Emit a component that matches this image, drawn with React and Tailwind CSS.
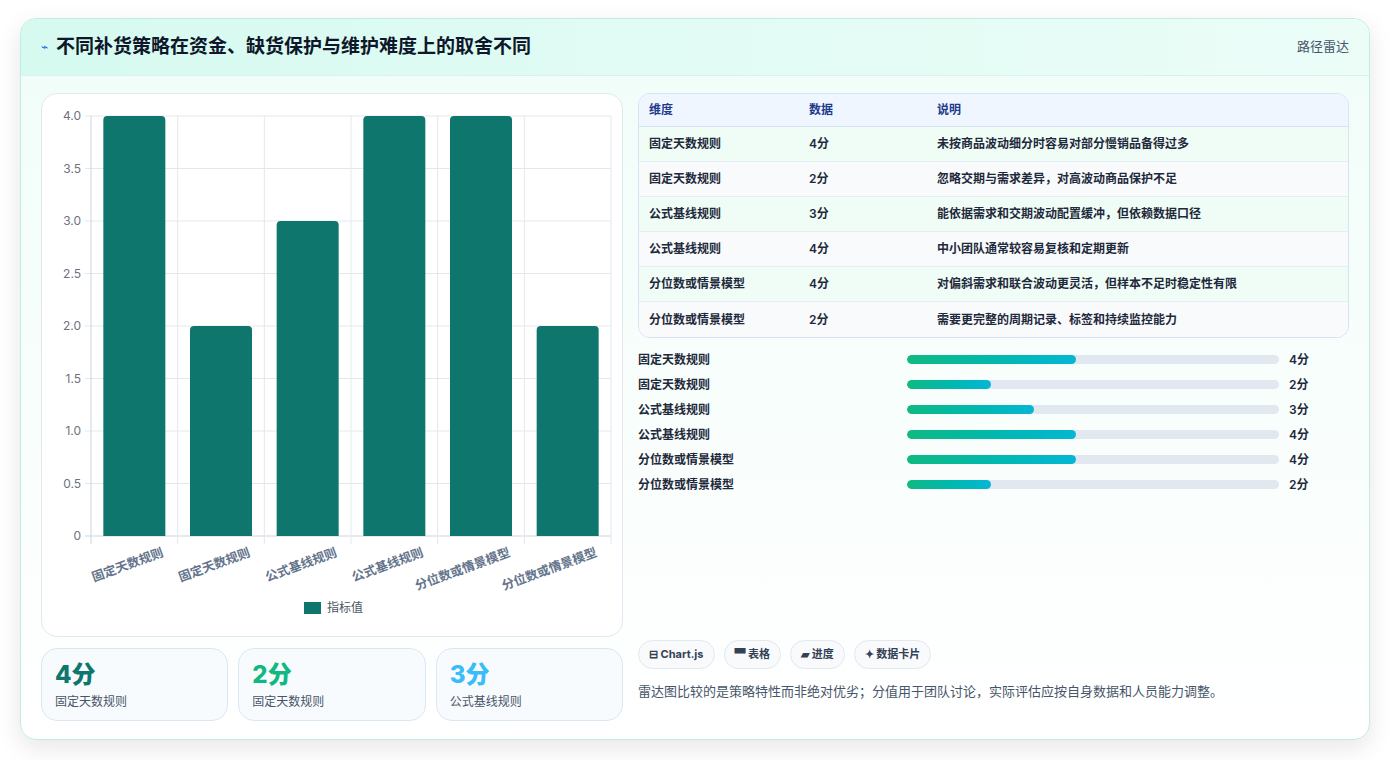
import React from "react";

const bars = [
  ["固定天数规则", 4],
  ["固定天数规则", 2],
  ["公式基线规则", 3],
  ["公式基线规则", 4],
  ["分位数或情景模型", 4],
  ["分位数或情景模型", 2],
];
const rows = [
  ["固定天数规则", "4分", "未按商品波动细分时容易对部分慢销品备得过多"],
  ["固定天数规则", "2分", "忽略交期与需求差异，对高波动商品保护不足"],
  ["公式基线规则", "3分", "能依据需求和交期波动配置缓冲，但依赖数据口径"],
  ["公式基线规则", "4分", "中小团队通常较容易复核和定期更新"],
  ["分位数或情景模型", "4分", "对偏斜需求和联合波动更灵活，但样本不足时稳定性有限"],
  ["分位数或情景模型", "2分", "需要更完整的周期记录、标签和持续监控能力"],
];

function Chart() {
  const x0 = 49, x1 = 569, y0 = 22, y1 = 442;
  const cw = (x1 - x0) / 6;
  const ticks = ["0", "0.5", "1.0", "1.5", "2.0", "2.5", "3.0", "3.5", "4.0"];
  return (
    <svg width="582" height="542" className="block" style={{ fontFamily: "Inter, 'Noto Sans CJK SC', sans-serif" }}>
      {ticks.map((t, i) => {
        const y = y1 - i * 52.5;
        return (
          <g key={i}>
            <line x1={x0 - 6} x2={x1} y1={y} y2={y} stroke={i === 0 ? "#cbd5e1" : "#e5e7eb"} />
            <text x={x0 - 10} y={y + 4} textAnchor="end" fontSize="12" fill="#6b7280">{t}</text>
          </g>
        );
      })}
      {Array.from({ length: 7 }).map((_, i) => (
        <line key={i} x1={x0 + i * cw} x2={x0 + i * cw} y1={y0} y2={y1 + 8} stroke={i === 0 ? "#cbd5e1" : "#e5e7eb"} />
      ))}
      {bars.map(([l, v], i) => {
        const cx = x0 + i * cw + cw / 2;
        const h = v * 105;
        return (
          <g key={i}>
            <path d={`M${cx - 31},${y1} V${y1 - h + 4} Q${cx - 31},${y1 - h} ${cx - 27},${y1 - h} H${cx + 27} Q${cx + 31},${y1 - h} ${cx + 31},${y1 - h + 4} V${y1} Z`} fill="#0f766e" />
            <text transform={`translate(${cx + 30},${y1 + 20}) rotate(-20)`} textAnchor="end" fontSize="12.5" fontWeight="700" fill="#64748b">{l}</text>
          </g>
        );
      })}
      <rect x="262" y="508" width="17" height="12" fill="#0f766e" />
      <text x="285" y="518" fontSize="12" fill="#4b5563">指标值</text>
    </svg>
  );
}

export default function App() {
  return (
    <div className="min-h-[760px] bg-white p-5 pt-[18px]" style={{ fontFamily: "Inter, 'Noto Sans CJK SC', sans-serif" }}>
      <div className="w-[1350px] h-[722px] rounded-2xl border border-[#bfeee0] shadow-[0_8px_24px_rgba(15,23,42,0.10)] overflow-hidden bg-gradient-to-b from-[#f0fdf8] to-white flex flex-col">
        <div className="h-[57px] flex items-center justify-between px-5 bg-gradient-to-r from-[#d6faf0] to-[#ecfdf8] border-b border-[#d9f3ec]">
          <div className="flex items-center gap-2">
            <span className="text-[#2563eb] text-xs">⌁</span>
            <span className="text-[19px] font-bold text-[#0f172a]">不同补货策略在资金、缺货保护与维护难度上的取舍不同</span>
          </div>
          <span className="text-[13px] text-[#475569]">路径雷达</span>
        </div>
        <div className="flex gap-[15px] px-5 pt-[17px]">
          <div className="w-[582px] flex flex-col gap-[11px]">
            <div className="h-[544px] rounded-2xl border border-[#e2e8f0] bg-white"><Chart /></div>
            <div className="grid grid-cols-3 gap-[10px]">
              {[["4分", "text-[#0f766e]", "固定天数规则"], ["2分", "text-[#10b981]", "固定天数规则"], ["3分", "text-[#38bdf8]", "公式基线规则"]].map(([v, c, l], i) => (
                <div key={i} className="h-[73px] rounded-2xl border border-[#dbe7f3] bg-[#f8fbfe] px-[13px] pt-[10px]">
                  <div className={`text-[24px] font-extrabold leading-[32px] ${c}`}>{v}</div>
                  <div className="text-[12px] text-[#475569] mt-[2px]">{l}</div>
                </div>
              ))}
            </div>
          </div>
          <div className="w-[713px] flex flex-col">
            <div className="rounded-xl border border-[#d7e3f0] overflow-hidden text-[12px] font-semibold text-[#1e293b]">
              <div className="h-[33px] flex items-center bg-[#eff6ff] border-b border-[#d7e3f0] text-[#1e3a8a]">
                <div className="w-[170px] pl-[10px]">维度</div>
                <div className="w-[128px]">数据</div>
                <div>说明</div>
              </div>
              {rows.map((r, i) => (
                <div key={i} className={`h-[35px] flex items-center ${i % 2 ? "bg-[#f8fafc]" : "bg-[#f0fdf6]"} ${i < 5 ? "border-b border-[#e5edf5]" : ""}`}>
                  <div className="w-[170px] pl-[10px]">{r[0]}</div>
                  <div className="w-[128px]">{r[1]}</div>
                  <div>{r[2]}</div>
                </div>
              ))}
            </div>
            <div className="mt-[9px] flex flex-col">
              {bars.map(([l, v], i) => (
                <div key={i} className="h-[25px] flex items-center text-[12px] font-semibold text-[#1e293b]">
                  <div className="w-[269px]">{l}</div>
                  <div className="w-[372px] h-[9px] rounded-full bg-[#e2e8f0] overflow-hidden">
                    <div className="h-full rounded-full bg-gradient-to-r from-[#10b981] to-[#06b6d4]" style={{ width: `${v * 11.35}%` }} />
                  </div>
                  <div className="pl-[10px]">{v}分</div>
                </div>
              ))}
            </div>
            <div className="mt-auto flex gap-[9px]">
              {["⊟ Chart.js", "▀ 表格", "▰ 进度", "✦ 数据卡片"].map((t, i) => (
                <span key={i} className="h-[29px] px-[10px] rounded-full border border-[#e2e8f0] bg-[#f8fafc] text-[11px] font-bold text-[#334155] flex items-center">{t}</span>
              ))}
            </div>
            <div className="mt-[13px] mb-[20px] text-[13px] text-[#475569]">雷达图比较的是策略特性而非绝对优劣；分值用于团队讨论，实际评估应按自身数据和人员能力调整。</div>
          </div>
        </div>
      </div>
    </div>
  );
}
